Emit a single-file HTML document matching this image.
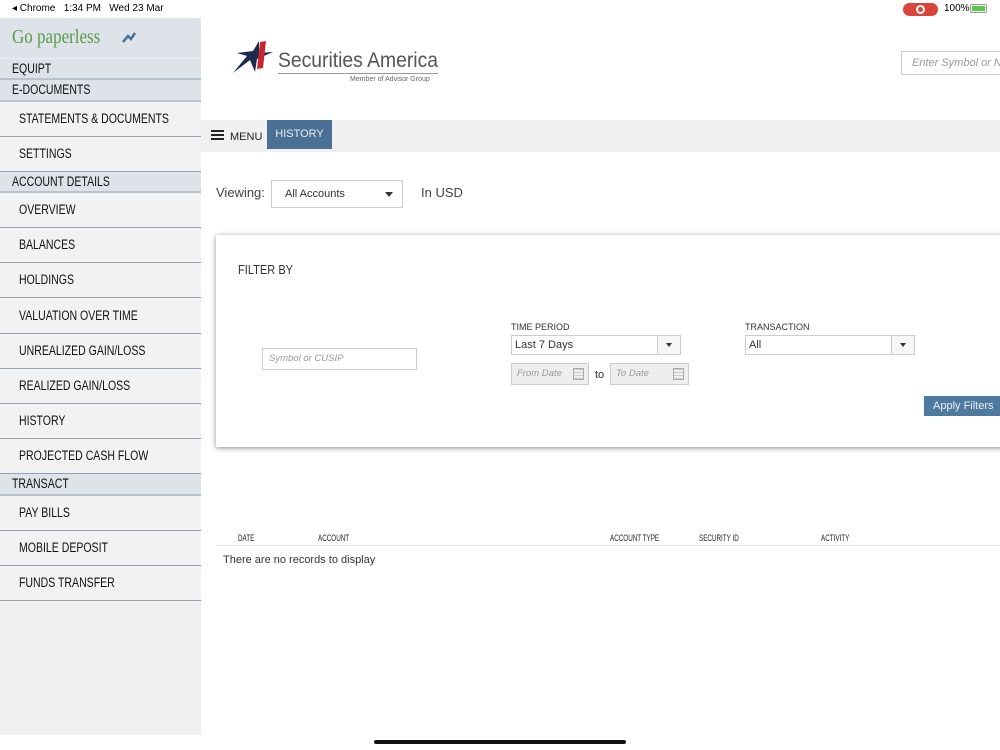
<!DOCTYPE html>
<html><head><meta charset="utf-8"><style>
*{box-sizing:border-box;margin:0;padding:0}
body{width:1000px;height:750px;position:relative;overflow:hidden;background:#fff;font-family:"Liberation Sans",sans-serif;color:#333}
.abs{position:absolute}
.n{display:inline-block;transform:scaleX(0.78);transform-origin:left center;white-space:nowrap}
#sb{left:0;top:18px;width:201px;height:717px;background:#efefef}
.hd{position:absolute;left:0;width:201px;background:#dde3e8;border-bottom:2px solid #b7c3cf;font-size:13.5px;padding-left:12px;color:#111;white-space:nowrap}
.it{position:absolute;left:0;width:201px;background:#f2f2f2;border-bottom:1.5px solid #8fa4b8;font-size:13.5px;padding-left:19px;color:#111;white-space:nowrap}
.inp{position:absolute;border:1px solid #ccc;background:#fff;font-size:11px;white-space:nowrap;overflow:hidden}
.th{position:absolute;top:533px;font-size:9px;color:#222}
</style></head><body>
<div class="abs" style="left:12px;top:3px;font-size:10px;color:#000">◂ Chrome &nbsp; 1:34 PM &nbsp; Wed 23 Mar</div>
<div class="abs" style="left:903px;top:3px;width:35px;height:13px;background:#d9453a;border-radius:7px"><div style="position:absolute;left:13px;top:2px;width:9px;height:9px;border:2px solid #fff;border-radius:50%"></div></div>
<div class="abs" style="left:944px;top:3px;font-size:10px;color:#000">100%</div>
<div class="abs" style="left:970px;top:4px;width:17px;height:9px;border:1px solid #999;border-radius:2px;padding:1px"><div style="width:100%;height:100%;background:#5ac84b"></div></div>

<div id="sb" class="abs">
<div style="position:absolute;left:0;top:0;width:201px;height:40px;background:#dde3e8"></div>
<div style="position:absolute;left:12px;top:8px;font-family:'Liberation Serif',serif;font-size:20px;color:#5a9a4a"><span class="n" style="transform:scaleX(0.85)">Go paperless</span></div>
<svg style="position:absolute;left:122px;top:13px" width="14" height="12"><path d="M1 11L6 5L9 8L13 2" stroke="#4a7096" stroke-width="2.5" fill="none"/></svg>
<div class="hd" style="top:41px;height:21px;line-height:20px"><span class="n">EQUIPT</span></div>
<div class="hd" style="top:62px;height:22px;line-height:20px"><span class="n">E-DOCUMENTS</span></div>
<div class="it" style="top:84px;height:35px;line-height:34px"><span class="n">STATEMENTS &amp; DOCUMENTS</span></div>
<div class="it" style="top:119px;height:35px;line-height:34px"><span class="n">SETTINGS</span></div>
<div class="hd" style="top:154px;height:21px;line-height:20px"><span class="n">ACCOUNT DETAILS</span></div>
<div class="it" style="top:175px;height:35px;line-height:34px"><span class="n">OVERVIEW</span></div>
<div class="it" style="top:210px;height:35px;line-height:34px"><span class="n">BALANCES</span></div>
<div class="it" style="top:245px;height:35px;line-height:34px"><span class="n">HOLDINGS</span></div>
<div class="it" style="top:280px;height:36px;line-height:35px"><span class="n">VALUATION OVER TIME</span></div>
<div class="it" style="top:316px;height:35px;line-height:34px"><span class="n">UNREALIZED GAIN/LOSS</span></div>
<div class="it" style="top:351px;height:35px;line-height:34px"><span class="n">REALIZED GAIN/LOSS</span></div>
<div class="it" style="top:386px;height:35px;line-height:34px"><span class="n">HISTORY</span></div>
<div class="it" style="top:421px;height:35px;line-height:34px"><span class="n">PROJECTED CASH FLOW</span></div>
<div class="hd" style="top:456px;height:22px;line-height:20px"><span class="n">TRANSACT</span></div>
<div class="it" style="top:478px;height:35px;line-height:34px"><span class="n">PAY BILLS</span></div>
<div class="it" style="top:513px;height:35px;line-height:34px"><span class="n">MOBILE DEPOSIT</span></div>
<div class="it" style="top:548px;height:35px;line-height:34px"><span class="n">FUNDS TRANSFER</span></div>
</div>

<svg class="abs" style="left:233px;top:40px" width="45" height="34"><path d="M0 33L14 16L4 13L20 11L26 1L26 13L40 12L24 19L22 32L17 20Z" fill="#1c2a4f"/><path d="M27 2L33 1L30 28L24 29Z" fill="#c8262f"/></svg>
<div class="abs" style="left:278px;top:49px;font-size:21px;color:#555"><span class="n" style="transform:scaleX(0.92)">Securities America</span></div>
<div class="abs" style="left:278px;top:73px;width:160px;height:1px;background:#999"></div>
<div class="abs" style="left:350px;top:76px;font-size:7px;color:#666">Member of Advisor Group</div>
<div class="inp" style="left:901px;top:51px;width:110px;height:24px;padding:5px 10px;color:#999;font-style:italic;font-size:11px">Enter Symbol or N</div>

<div class="abs" style="left:201px;top:120px;width:799px;height:32px;background:#f0f0f0"></div>
<div class="abs" style="left:211px;top:130px;width:13px;height:2px;background:#222;box-shadow:0 4px 0 #222,0 8px 0 #222"></div>
<div class="abs" style="left:230px;top:131px;font-size:11px;color:#222">MENU</div>
<div class="abs" style="left:267px;top:120px;width:65px;height:29px;background:#4a7096;color:#e8eef4;font-size:11px;text-align:center;line-height:29px">HISTORY</div>

<div class="abs" style="left:216px;top:185px;font-size:13px;color:#444">Viewing:</div>
<div class="inp" style="left:271px;top:180px;width:132px;height:28px;padding:6px 13px;font-size:11px;color:#333;line-height:14px">All Accounts<span style="position:absolute;right:9px;top:11px;border:4px solid transparent;border-top:5px solid #333"></span></div>
<div class="abs" style="left:421px;top:185px;font-size:13px;color:#444">In USD</div>

<div class="abs" style="left:216px;top:235px;width:800px;height:212px;background:#fff;box-shadow:0 1px 5px rgba(0,0,0,0.45)"></div>
<div class="abs" style="left:238px;top:262px;font-size:13px;color:#333"><span class="n" style="transform:scaleX(0.85)">FILTER BY</span></div>
<div class="inp" style="left:262px;top:348px;width:155px;height:22px;padding:4px 6px;color:#999;font-style:italic;font-size:9.5px">Symbol or CUSIP</div>
<div class="abs" style="left:511px;top:322px;font-size:9px;color:#333">TIME PERIOD</div>
<div class="inp" style="left:511px;top:335px;width:170px;height:20px;padding:3px 3px;font-size:11px">Last 7 Days<span style="position:absolute;right:0;top:0;width:23px;height:18px;border-left:1px solid #ccc;background:#f6f6f6"><span style="position:absolute;left:8px;top:7px;border:3px solid transparent;border-top:4px solid #333"></span></span></div>
<div class="abs" style="left:745px;top:322px;font-size:9px;color:#333">TRANSACTION</div>
<div class="inp" style="left:745px;top:335px;width:170px;height:20px;padding:3px 3px;font-size:11px">All<span style="position:absolute;right:0;top:0;width:23px;height:18px;border-left:1px solid #ccc;background:#f6f6f6"><span style="position:absolute;left:8px;top:7px;border:3px solid transparent;border-top:4px solid #333"></span></span></div>
<div class="inp" style="left:511px;top:363px;width:78px;height:22px;background:#eee;padding:4px 5px;color:#999;font-style:italic;font-size:9.5px">From Date<span style="position:absolute;right:4px;top:4px;width:11px;height:12px;border:1px solid #aaa;background:repeating-linear-gradient(0deg,#ccc 0 1px,transparent 1px 3px)"></span></div>
<div class="abs" style="left:595px;top:369px;font-size:11px">to</div>
<div class="inp" style="left:610px;top:363px;width:79px;height:22px;background:#eee;padding:4px 5px;color:#999;font-style:italic;font-size:9.5px">To Date<span style="position:absolute;right:4px;top:4px;width:11px;height:12px;border:1px solid #aaa;background:repeating-linear-gradient(0deg,#ccc 0 1px,transparent 1px 3px)"></span></div>
<div class="abs" style="left:924px;top:396px;width:76px;height:20px;background:#4f7aa0;color:#eef;font-size:11px;line-height:20px;padding-left:9px;white-space:nowrap">Apply Filters</div>

<div class="th" style="left:238px"><span class="n" style="transform:scaleX(0.7)">DATE</span></div>
<div class="th" style="left:318px"><span class="n" style="transform:scaleX(0.7)">ACCOUNT</span></div>
<div class="th" style="left:610px"><span class="n" style="transform:scaleX(0.7)">ACCOUNT TYPE</span></div>
<div class="th" style="left:699px"><span class="n" style="transform:scaleX(0.7)">SECURITY ID</span></div>
<div class="th" style="left:821px"><span class="n" style="transform:scaleX(0.7)">ACTIVITY</span></div>
<div class="abs" style="left:216px;top:545px;width:784px;height:1px;background:#e4e4e4"></div>
<div class="abs" style="left:223px;top:554px;font-size:11px;color:#333">There are no records to display</div>

<div class="abs" style="left:374px;top:740px;width:252px;height:4px;border-radius:2px;background:#111"></div>
</body></html>
